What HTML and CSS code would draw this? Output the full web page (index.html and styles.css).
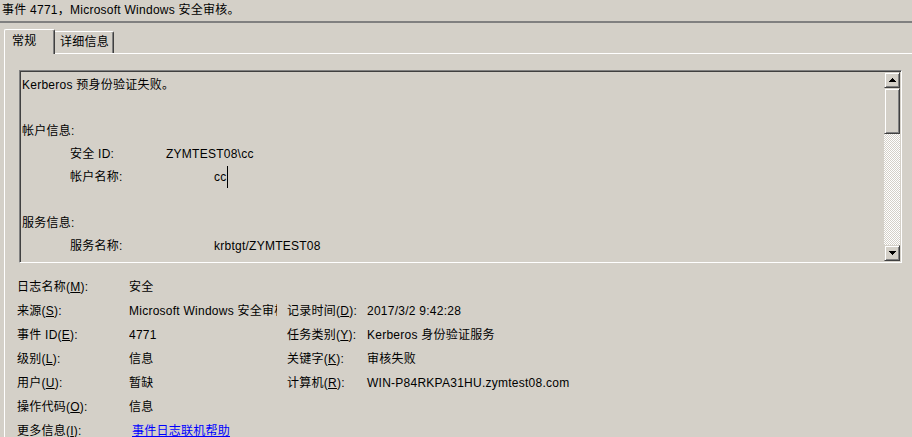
FILE: index.html
```html
<!DOCTYPE html>
<html lang="zh-CN">
<head>
<meta charset="utf-8">
<link rel="stylesheet" href="styles.css">
</head>
<body>
<div class="title">事件 4771，Microsoft Windows 安全审核。</div>
<div class="rule"></div>
<div class="tabstrip">
  <div class="tab active">常规</div>
  <div class="tab">详细信息</div>
</div>
<div class="panel">
  <div class="desc">
    <div class="desc-text">
      <div class="line">Kerberos 预身份验证失败。</div>
      <div class="line"></div>
      <div class="line">帐户信息:</div>
      <div class="line ind"><span class="k k1">安全 ID:</span>ZYMTEST08\cc</div>
      <div class="line ind"><span class="k k2">帐户名称:</span>cc<span class="caret"></span></div>
      <div class="line"></div>
      <div class="line">服务信息:</div>
      <div class="line ind"><span class="k k2">服务名称:</span>krbtgt/ZYMTEST08</div>
    </div>
    <div class="vscroll">
      <div class="sbtn"><svg width="7" height="4" viewBox="0 0 7 4"><path d="M3 0h1v1h1v1h1v1h1v1H0V3h1V2h1V1h1z"/></svg></div>
      <div class="thumb"></div>
      <div class="track"></div>
      <div class="sbtn"><svg width="7" height="4" viewBox="0 0 7 4"><path d="M0 0h7v1H6v1H5v1H4v1H3V3H2V2H1V1H0z"/></svg></div>
    </div>
  </div>
  <div class="fields">
    <div>日志名称(<u>M</u>):</div><div class="val">安全</div><div></div><div></div>
    <div>来源(<u>S</u>):</div><div class="val">Microsoft Windows 安全审核</div><div class="l2">记录时间(<u>D</u>):</div><div>2017/3/2 9:42:28</div>
    <div>事件 ID(<u>E</u>):</div><div class="val">4771</div><div class="l2">任务类别(<u>Y</u>):</div><div>Kerberos 身份验证服务</div>
    <div>级别(<u>L</u>):</div><div class="val">信息</div><div class="l2">关键字(<u>K</u>):</div><div>审核失败</div>
    <div>用户(<u>U</u>):</div><div class="val">暂缺</div><div class="l2">计算机(<u>R</u>):</div><div>WIN-P84RKPA31HU.zymtest08.com</div>
    <div>操作代码(<u>O</u>):</div><div class="val">信息</div><div></div><div></div>
    <div>更多信息(<u>I</u>):</div><div class="val"><a class="link" href="#">事件日志联机帮助</a></div><div></div><div></div>
  </div>
</div>
</body>
</html>
```
FILE: styles.css
```css
html, body {
  margin: 0;
  padding: 0;
  height: 100%;
  overflow: hidden;
}
body {
  background: #d4d0c8;
  color: #000;
  font-family: "Liberation Sans", "Noto Sans CJK SC", sans-serif;
  font-size: 12px;
  letter-spacing: 0.25px;
}
.title {
  height: 21px;
  line-height: 21px;
  padding-left: 2px;
  white-space: nowrap;
}
.rule {
  height: 2px;
  background: #808080;
}
.tabstrip {
  display: flex;
  align-items: flex-end;
  height: 24px;
  margin: 6px 0 0 4px;
  border-bottom: 1px solid #fff;
}
.tab {
  box-sizing: border-box;
  height: 22px;
  width: 59px;
  padding-left: 5px;
  line-height: 20px;
  border-top: 1px solid #fff;
  border-right: 1px solid #404040;
  box-shadow: inset -1px 0 #808080;
  border-top-right-radius: 2px;
  white-space: nowrap;
}
.tab.active {
  height: 25px;
  width: 51px;
  margin-bottom: -1px;
  padding-left: 7px;
  line-height: 22px;
  border-left: 1px solid #fff;
  border-top-left-radius: 2px;
  background: #d4d0c8;
}
.panel {
  margin-left: 4px;
  border-left: 1px solid #fff;
  height: calc(100vh - 54px);
  padding-top: 16px;
  box-sizing: border-box;
}
.desc {
  box-sizing: border-box;
  width: 883px;
  height: 193px;
  margin-left: 14px;
  padding: 1px;
  border: 1px solid;
  border-color: #808080 #fff #fff #808080;
  box-shadow: inset 1px 1px #404040, inset -1px -1px #d4d0c8;
  display: flex;
}
.desc-text {
  flex: 1;
  overflow: hidden;
  padding: 2px 0 0 1px;
}
.line {
  height: 23px;
  line-height: 23px;
  white-space: nowrap;
}
.line.ind {
  padding-left: 48px;
}
.k {
  display: inline-block;
}
.k1 {
  width: 96px;
}
.k2 {
  width: 144px;
}
.caret {
  display: inline-block;
  width: 1px;
  height: 22px;
  background: #000;
  vertical-align: top;
}
.vscroll {
  width: 16px;
  display: flex;
  flex-direction: column;
}
.sbtn, .thumb {
  box-sizing: border-box;
  border: 1px solid;
  border-color: #d4d0c8 #404040 #404040 #d4d0c8;
  box-shadow: inset 1px 1px #fff, inset -1px -1px #808080;
  background: #d4d0c8;
}
.sbtn {
  height: 16px;
  display: flex;
  align-items: center;
  justify-content: center;
}
.sbtn svg {
  display: block;
  fill: #000;
}
.thumb {
  height: 46px;
}
.track {
  flex: 1;
  background: repeating-conic-gradient(#fff 0 25%, #d4d0c8 0 50%) 0 0 / 2px 2px;
}
.fields {
  display: grid;
  grid-template-columns: 112px 148px 90px 1fr;
  grid-auto-rows: 24px;
  line-height: 24px;
  margin: 12px 0 0 12px;
  white-space: nowrap;
}
.fields u {
  text-decoration: underline;
}
.val {
  overflow: hidden;
}
.l2 {
  padding-left: 10px;
}
.link {
  color: #0000ff;
  text-decoration: underline;
  padding-left: 3px;
}
```
